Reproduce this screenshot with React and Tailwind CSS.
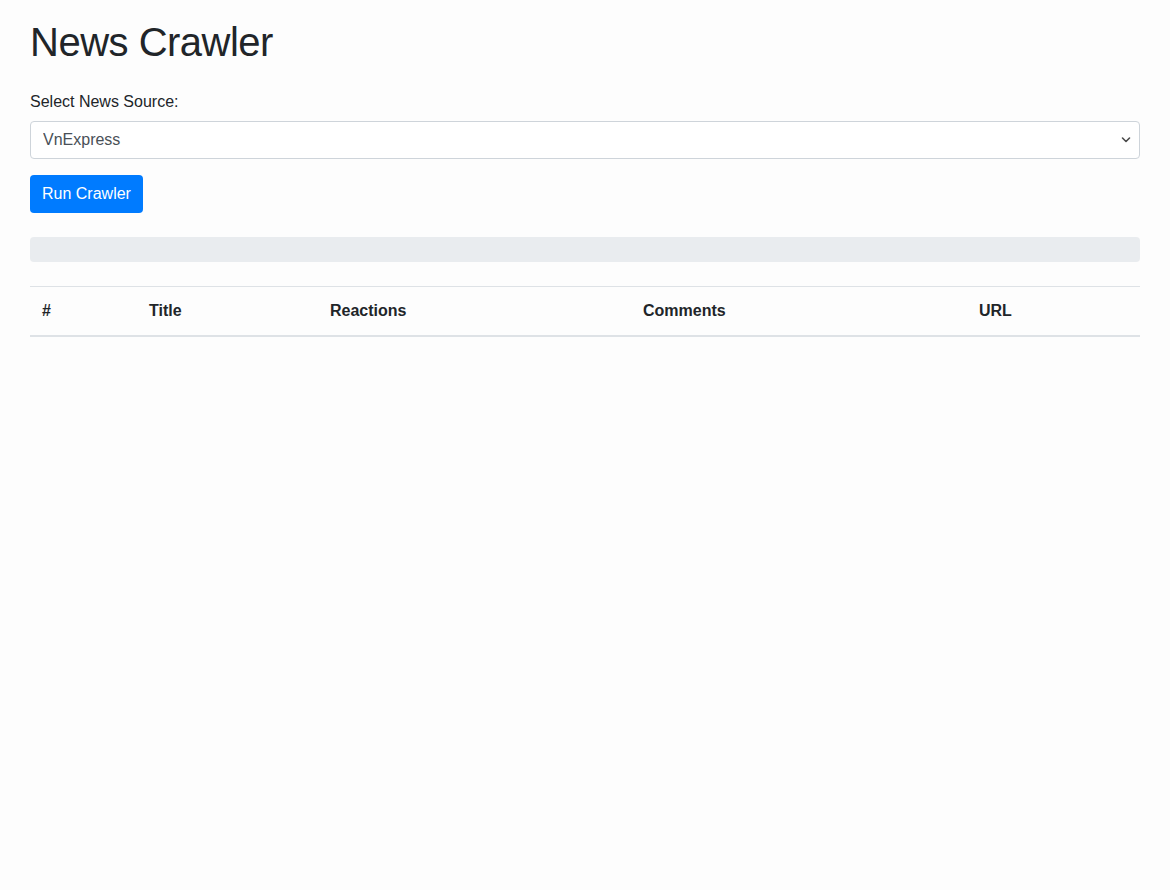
export default function App() {
  const cols = [
    { label: '#', w: 'w-[107px]' },
    { label: 'Title', w: 'w-[181px]' },
    { label: 'Reactions', w: 'w-[313px]' },
    { label: 'Comments', w: 'w-[336px]' },
    { label: 'URL', w: 'w-[173px]' },
  ]

  return (
    <div className="min-h-screen bg-[#fdfdfd] text-[#212529] font-['Liberation_Sans',Arial,sans-serif]">
      <div className="w-[1110px] mx-auto pt-[18px]">
        <h1 className="text-[40px] leading-[48px] font-medium tracking-[-0.5px] mb-[23px]">News Crawler</h1>

        <label className="block text-[16px] leading-6 pt-px mb-[7px]">Select News Source:</label>
        <div className="relative">
          <select className="w-full h-[38px] appearance-none bg-white border border-[#ced4da] rounded-[4px] pl-3 pr-8 text-[16px] text-[#495057] outline-none">
            <option>VnExpress</option>
          </select>
          <svg className="absolute right-[9px] top-[15px] pointer-events-none" width="10" height="8" viewBox="0 0 10 8">
            <path d="M1.5 2 L5 5.5 L8.5 2" fill="none" stroke="#4a4a4a" strokeWidth="1.6" strokeLinecap="round" strokeLinejoin="round" />
          </svg>
        </div>

        <button className="mt-4 h-[38px] px-3 rounded-[4px] bg-[#007bff] text-white text-[16px] leading-6">
          Run Crawler
        </button>

        <div className="mt-6 h-[25px] rounded-[4px] bg-[#e9ecef]" />

        <table className="mt-6 w-full border-collapse text-left">
          <thead>
            <tr className="border-t border-[#dee2e6] border-b-2">
              {cols.map(c => (
                <th key={c.label} className={`${c.w} p-3 text-[16px] leading-6 font-bold border-b-2 border-[#dee2e6]`}>
                  {c.label}
                </th>
              ))}
            </tr>
          </thead>
          <tbody />
        </table>
      </div>
    </div>
  )
}
